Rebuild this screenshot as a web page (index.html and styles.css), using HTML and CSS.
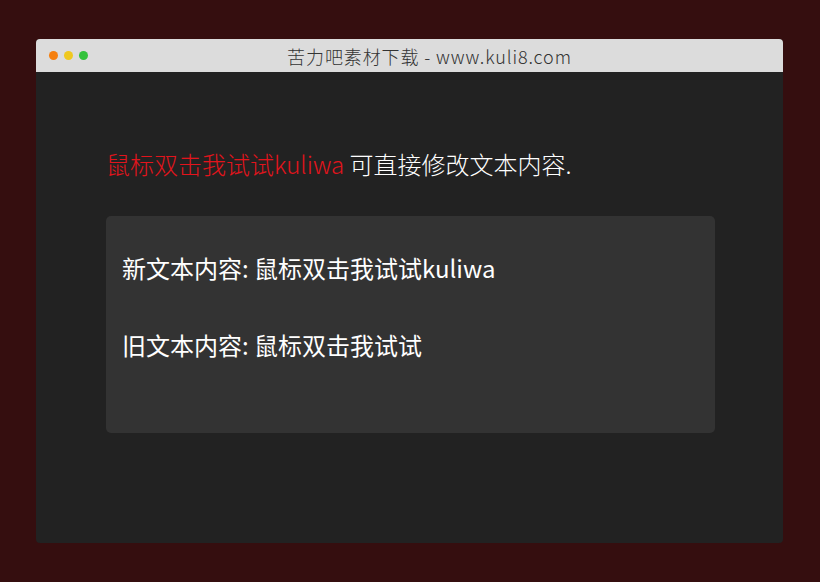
FILE: index.html
```html
<!DOCTYPE html>
<html lang="zh-CN">
<head>
<meta charset="utf-8">
<title>苦力吧素材下载</title>
<link rel="stylesheet" href="styles.css">
</head>
<body>
<div class="window">
  <div class="titlebar">
    <div class="dots">
      <span class="dot orange"></span>
      <span class="dot yellow"></span>
      <span class="dot green"></span>
    </div>
    <div class="title">苦力吧素材下载 - www.kuli8.com</div>
  </div>
  <div class="content">
    <p class="intro"><span class="editable">鼠标双击我试试kuliwa</span> 可直接修改文本内容.</p>
    <div class="panel">
      <p class="line">新文本内容: 鼠标双击我试试kuliwa</p>
      <p class="line">旧文本内容: 鼠标双击我试试</p>
    </div>
  </div>
</div>
</body>
</html>
```
FILE: styles.css
```css
html, body {
  margin: 0;
  padding: 0;
}
body {
  background: #350e0f;
  width: 820px;
  height: 582px;
  font-family: "Noto Sans CJK SC", "Noto Sans", sans-serif;
  padding-top: 39px;
  padding-left: 36px;
  box-sizing: border-box;
}
.window {
  width: 747px;
  height: 504px;
  background: #222222;
  border-radius: 4px;
  overflow: hidden;
  display: flex;
  flex-direction: column;
}
.titlebar {
  height: 33px;
  background: #dcdcdc;
  display: flex;
  align-items: center;
}
.dots {
  display: flex;
  gap: 6px;
  padding-left: 13px;
}
.dot {
  width: 9px;
  height: 9px;
  border-radius: 50%;
  display: block;
}
.orange { background: #f57f0e; }
.yellow { background: #efc81f; }
.green { background: #33c23b; }
.title {
  flex: 1;
  text-align: center;
  font-size: 18px;
  color: #333;
  margin-left: -12px;
  letter-spacing: 0.9px;
  font-weight: 300;
}
.content {
  padding: 74px 68px 0 70px;
}
.intro {
  margin: 0;
  font-size: 24px;
  line-height: 36px;
  color: #ffffff;
  font-weight: 300;
}
.editable {
  color: #e3141c;
}
.panel {
  margin-top: 34px;
  background: #333333;
  border-radius: 5px;
  padding: 34px 16px 34px 16px;
  height: 217px;
  box-sizing: border-box;
  display: flex;
  flex-direction: column;
  gap: 41px;
}
.line {
  margin: 0;
  font-size: 24px;
  line-height: 36px;
  color: #ffffff;
  font-weight: 400;
}
```
